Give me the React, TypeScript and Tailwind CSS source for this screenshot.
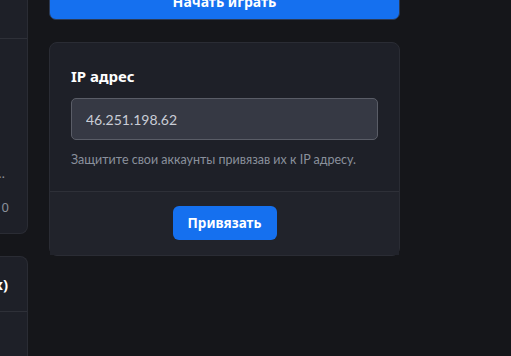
export default function App() {
  return (
    <div
      className="flex min-h-screen items-start gap-[21px] overflow-hidden bg-[#15161a] text-white"
      style={{ fontFamily: '"Noto Sans", "Open Sans", sans-serif' }}
    >
      {/* side column, mostly scrolled off to the left */}
      <div className="flex w-[28px] shrink-0 flex-col gap-[22px]">
        <div className="mt-[-40px] flex flex-col rounded-br-[8px] rounded-tr-[8px] border border-l-0 border-[#2a2c34] bg-[#1e2028]">
          <div className="h-[78px] border-b border-[#2e3038]" />
          <div className="flex h-[194px] flex-col items-end overflow-hidden pr-[22px]">
            <div className="mt-[126px] whitespace-nowrap text-[13px] leading-[16px] text-[#8b909b]">
              …
            </div>
            <div className="mr-[-4px] mt-[17px] whitespace-nowrap text-[13px] text-[#8b909b]">
              0
            </div>
          </div>
        </div>
        <div className="flex flex-col rounded-tr-[8px] border border-l-0 border-[#2a2c34] bg-[#1e2028]">
          <div className="flex h-[55px] items-center justify-end overflow-hidden border-b border-[#2e3038] pr-[19px]">
            <span className="whitespace-nowrap text-[15px] font-bold">x)</span>
          </div>
          <div className="h-[60px]" />
        </div>
      </div>

      {/* main column */}
      <div className="flex w-[351px] shrink-0 flex-col gap-[22px]">
        <button className="mt-[-24px] flex h-[44px] items-end justify-center rounded-[7px] border border-[#2b3a55] bg-[#1570ef] pb-[7px] text-[14px] font-bold leading-[20px] text-white">
          Начать играть
        </button>

        <div className="flex flex-col rounded-[8px] border border-[#2a2c34] bg-[#1e2028]">
          <div className="flex flex-col px-[21px] pb-[22px] pt-[23px]">
            <label className="text-[15px] font-bold leading-[20px] text-white">
              IP адрес
            </label>
            <input
              defaultValue="46.251.198.62"
              className="mt-[12px] h-[42px] w-full rounded-[5px] border border-[#5a5d67] bg-[#363944] px-[14px] text-[14px] text-[#c9cdd6] outline-none"
              style={{ fontFamily: 'Lato, "Noto Sans", sans-serif' }}
            />
            <p
              className="mt-[11px] whitespace-nowrap text-[12.5px] leading-[18px] text-[#8a909c]"
              style={{ fontFamily: 'Lato, "Noto Sans", sans-serif' }}
            >
              Защитите свои аккаунты привязав их к IP адресу.
            </p>
          </div>
          <div className="flex justify-center border-t border-[#2e3038] bg-[#21232b] pb-[15px] pt-[14px]">
            <button className="h-[34px] w-[104px] rounded-[6px] bg-[#1570ef] text-[13.5px] font-bold text-white">
              Привязать
            </button>
          </div>
        </div>
      </div>
    </div>
  );
}
